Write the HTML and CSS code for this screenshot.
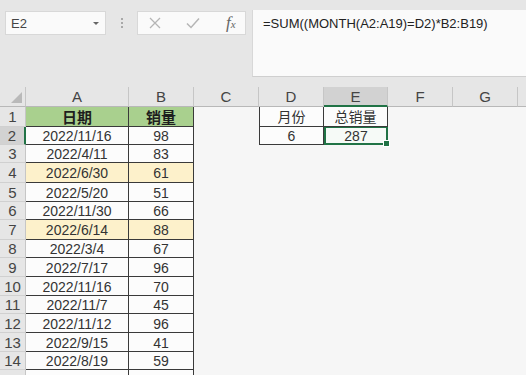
FILE: index.html
```html
<!DOCTYPE html>
<html lang="zh-CN">
<head>
  <meta charset="UTF-8" />
  <title>销量统计</title>
  <link rel="stylesheet" href="styles.css">
</head>
<body>
  <div class="toolbar">
    <div class="name-box">
      <span>E2</span>
      <span class="caret"></span>
    </div>
    <div class="grip"><i></i><i></i><i></i></div>
    <div class="fx-box">
      <svg class="ico" width="14" height="14" viewBox="0 0 14 14"><path d="M2 2 L12 12 M12 2 L2 12" stroke="#b5b5b5" stroke-width="1.3" fill="none"/></svg>
      <svg class="ico" width="16" height="14" viewBox="0 0 16 14"><path d="M2 7.5 L6 11.5 L14 2.5" stroke="#b5b5b5" stroke-width="1.5" fill="none"/></svg>
      <span class="fx"><i>f</i><small>x</small></span>
    </div>
    <div class="formula">=SUM((MONTH(A2:A19)=D2)*B2:B19)</div>
  </div>

  <div class="sheet">
    <div class="row head">
      <div class="corner"><span></span></div>
      <div class="ch">A</div>
      <div class="ch">B</div>
      <div class="ch">C</div>
      <div class="ch">D</div>
      <div class="ch sel">E</div>
      <div class="ch">F</div>
      <div class="ch">G</div>
      <div class="ch last"></div>
    </div>

    <div class="row tall">
      <div class="rh">1</div>
      <div class="c t green">日期</div>
      <div class="c t green">销量</div>
      <div class="c"></div>
      <div class="c t bl">月份</div>
      <div class="c t">总销量</div>
    </div>
    <div class="row short">
      <div class="rh sel">2</div>
      <div class="c t">2022/11/16</div>
      <div class="c t">98</div>
      <div class="c"></div>
      <div class="c t bl">6</div>
      <div class="c t active">287</div>
    </div>
    <div class="row short">
      <div class="rh">3</div>
      <div class="c t">2022/4/11</div>
      <div class="c t">83</div>
    </div>
    <div class="row tall">
      <div class="rh">4</div>
      <div class="c t yellow">2022/6/30</div>
      <div class="c t yellow">61</div>
    </div>
    <div class="row">
      <div class="rh">5</div>
      <div class="c t">2022/5/20</div>
      <div class="c t">51</div>
    </div>
    <div class="row short">
      <div class="rh">6</div>
      <div class="c t">2022/11/30</div>
      <div class="c t">66</div>
    </div>
    <div class="row tall">
      <div class="rh">7</div>
      <div class="c t yellow">2022/6/14</div>
      <div class="c t yellow">88</div>
    </div>
    <div class="row short">
      <div class="rh">8</div>
      <div class="c t">2022/3/4</div>
      <div class="c t">67</div>
    </div>
    <div class="row">
      <div class="rh">9</div>
      <div class="c t">2022/7/17</div>
      <div class="c t">96</div>
    </div>
    <div class="row">
      <div class="rh">10</div>
      <div class="c t">2022/11/16</div>
      <div class="c t">70</div>
    </div>
    <div class="row short">
      <div class="rh">11</div>
      <div class="c t">2022/11/7</div>
      <div class="c t">45</div>
    </div>
    <div class="row">
      <div class="rh">12</div>
      <div class="c t">2022/11/12</div>
      <div class="c t">96</div>
    </div>
    <div class="row">
      <div class="rh">13</div>
      <div class="c t">2022/9/15</div>
      <div class="c t">41</div>
    </div>
    <div class="row short">
      <div class="rh">14</div>
      <div class="c t">2022/8/19</div>
      <div class="c t">59</div>
    </div>
    <div class="row">
      <div class="rh"></div>
      <div class="c t"></div>
      <div class="c t"></div>
    </div>
  </div>
</body>
</html>
```

FILE: styles.css
```css
* {
  margin: 0;
  padding: 0;
  box-sizing: border-box;
}

body {
  font-family: 'Liberation Sans', 'Noto Sans CJK SC', sans-serif;
  background: #f6f6f6;
  color: #333;
  width: 526px;
  height: 375px;
  overflow: hidden;
}

/* barra de fórmulas */
.toolbar {
  height: 87px;
  background: #e6e6e6;
  display: flex;
  align-items: flex-start;
  padding-top: 11px;
  padding-left: 5px;
}

.name-box {
  width: 101px;
  height: 24px;
  background: #fafafa;
  border: 1px solid #d8d8d8;
  display: flex;
  align-items: center;
  justify-content: space-between;
  padding: 0 6px 0 5px;
  font-size: 13px;
  color: #444;
}

.caret {
  width: 0;
  height: 0;
  border-left: 3px solid transparent;
  border-right: 3px solid transparent;
  border-top: 3px solid #666;
}

.grip {
  width: 31px;
  height: 24px;
  display: flex;
  flex-direction: column;
  align-items: center;
  justify-content: center;
  gap: 2px;
}

.grip i {
  width: 2px;
  height: 2px;
  background: #a8a8a8;
}

.fx-box {
  width: 109px;
  height: 24px;
  background: #fafafa;
  border: 1px solid #d8d8d8;
  display: flex;
  align-items: center;
  padding-left: 10px;
  gap: 23px;
}

.fx {
  font-family: 'Liberation Serif', serif;
  color: #666;
  font-size: 17px;
  margin-left: 2px;
}

.fx small {
  font-size: 11px;
  font-style: italic;
}

.formula {
  flex: 1;
  height: 67px;
  margin-left: 6px;
  margin-top: -1px;
  background: #fafafa;
  border-left: 1px solid #d8d8d8;
  border-bottom: 1px solid #cfcfcf;
  padding: 6px 0 0 10px;
  font-size: 13px;
  color: #222;
}

/* hoja */
.row {
  display: grid;
  grid-template-columns: 26px 103px 65px 65px 65px 64px 65px 65px 1fr;
  grid-template-rows: 100%;
  height: 19px;
}

.row.short {
  height: 18px;
}

.row.tall {
  height: 20px;
}

.row.head {
  height: 20px;
  background: #e6e6e6;
}

.corner {
  border-right: 1px solid #c6c6c6;
  border-bottom: 1px solid #b8b8b8;
  display: flex;
  align-items: flex-end;
  justify-content: flex-end;
  padding: 0 3px 3px 0;
}

.corner span {
  width: 0;
  height: 0;
  border-left: 11px solid transparent;
  border-bottom: 11px solid #b9b9b9;
}

.ch {
  border-right: 1px solid #c6c6c6;
  border-bottom: 1px solid #b8b8b8;
  text-align: center;
  font-size: 15px;
  line-height: 19px;
  color: #444;
}

.ch.sel {
  background: #d2d2d2;
  border-bottom: 2px solid #217346;
}

.ch.last {
  border-right: none;
}

.rh {
  background: #e6e6e6;
  border-right: 1px solid #c6c6c6;
  border-bottom: 1px solid #d0d0d0;
  font-size: 15px;
  line-height: 1;
  display: flex;
  align-items: center;
  justify-content: center;
  color: #444;
  min-height: 0;
  overflow: hidden;
}

.rh.sel {
  background: #d2d2d2;
  border-right: 2px solid #217346;
}

.c {
  font-size: 14px;
  line-height: 1;
  display: flex;
  align-items: center;
  justify-content: center;
  padding-top: 1px;
  min-height: 0;
  overflow: hidden;
}

.c.t {
  background: #fcfcfc;
  border-right: 1px solid #3a3a3a;
  border-bottom: 1px solid #3a3a3a;
}

.c.bl {
  border-left: 1px solid #3a3a3a;
}

.c.green {
  background: #a9d08e;
  font-weight: bold;
  font-size: 15px;
  color: #1e1e1e;
}

.c.yellow {
  background: #fdf1cb;
}

.c.active {
  background: #f6faf7;
  border: 2px solid #217346;
  border-top: 1px solid #217346;
  position: relative;
  overflow: visible;
}

.c.active::after {
  content: '';
  position: absolute;
  right: -4px;
  bottom: -4px;
  width: 5px;
  height: 5px;
  background: #217346;
  border: 1px solid #fff;
}
```
